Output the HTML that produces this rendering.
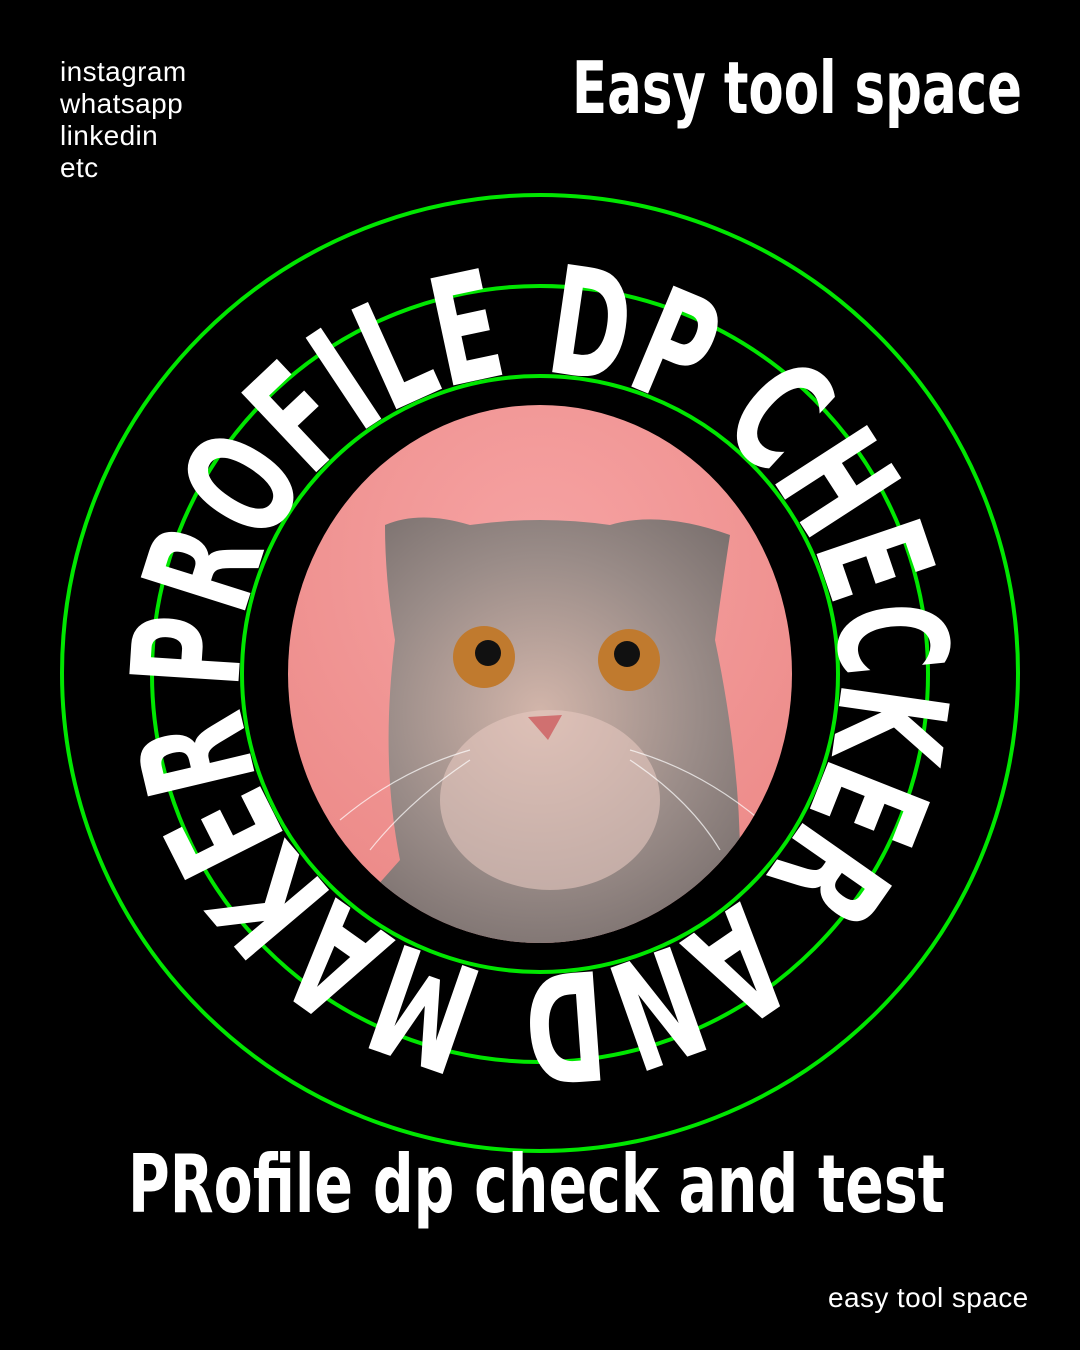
<!DOCTYPE html>
<html><head><meta charset="utf-8"><style>
html,body{margin:0;padding:0;background:#000;}
body{width:1080px;height:1350px;position:relative;overflow:hidden;font-family:"Liberation Sans",sans-serif;}
.small{position:absolute;color:#fff;font-size:28px;line-height:32px;letter-spacing:0.4px;}
</style></head><body>
<div class="small" style="left:60px;top:56px;">instagram<br>whatsapp<br>linkedin<br>etc</div>
<div class="small" style="left:828px;top:1282px;">easy tool space</div>
<svg width="1080" height="1350" style="position:absolute;left:0;top:0">
<defs>
<radialGradient id="pk" cx="0.5" cy="0.3" r="0.7"><stop offset="0" stop-color="#f6a3a3"/><stop offset="1" stop-color="#ec8a88"/></radialGradient>
<radialGradient id="fur" cx="0.5" cy="0.45" r="0.6"><stop offset="0" stop-color="#d2b5aa"/><stop offset="0.6" stop-color="#9a8c88"/><stop offset="1" stop-color="#7a706e"/></radialGradient>
<clipPath id="cp"><ellipse cx="540" cy="674" rx="252" ry="269"/></clipPath>
<path id="arc" d="M240,690 A300,300 0 1,1 840,658 A300,300 0 1,1 240,690"/>
</defs>
<circle cx="540" cy="673" r="478" fill="none" stroke="#00e600" stroke-width="4"/>
<circle cx="540" cy="674" r="388" fill="none" stroke="#00e600" stroke-width="4"/>
<circle cx="540" cy="674" r="298" fill="none" stroke="#00e600" stroke-width="4"/>
<g clip-path="url(#cp)">
<rect x="280" y="400" width="520" height="550" fill="url(#pk)"/>
<path d="M385,525 Q420,510 470,525 Q540,515 610,525 Q660,510 730,535 Q720,600 715,640 Q740,760 740,860 L760,950 L320,950 L400,860 Q380,760 395,640 Q385,580 385,525Z" fill="url(#fur)"/>
<ellipse cx="550" cy="800" rx="110" ry="90" fill="#e6c8c0" opacity="0.6"/>
<circle cx="484" cy="657" r="31" fill="#c07a2e"/><circle cx="488" cy="653" r="13" fill="#111"/>
<circle cx="629" cy="660" r="31" fill="#c07a2e"/><circle cx="627" cy="654" r="13" fill="#111"/>
<path d="M528,717 L562,715 L548,740Z" fill="#d07070"/>
<g stroke="#fff" stroke-width="1.2" opacity="0.7" fill="none"><path d="M470,750 Q400,770 340,820"/><path d="M470,760 Q410,800 370,850"/><path d="M630,750 Q700,770 760,820"/><path d="M630,760 Q690,800 720,850"/></g>
</g>
<text font-family="DejaVu Sans Condensed, Liberation Sans, sans-serif" font-weight="bold" font-size="150" fill="#fff"><textPath href="#arc" textLength="1870" lengthAdjust="spacingAndGlyphs">PROFILE DP CHECKER AND MAKER</textPath></text>
<text x="1022" y="113" text-anchor="end" font-family="DejaVu Sans Condensed, sans-serif" font-weight="bold" font-size="72" fill="#fff" textLength="450" lengthAdjust="spacingAndGlyphs">Easy tool space</text>
<text x="128" y="1212" font-family="DejaVu Sans Condensed, sans-serif" font-weight="bold" font-size="80" fill="#fff" textLength="817" lengthAdjust="spacingAndGlyphs">PRofile dp check and test</text>
</svg>
</body></html>
